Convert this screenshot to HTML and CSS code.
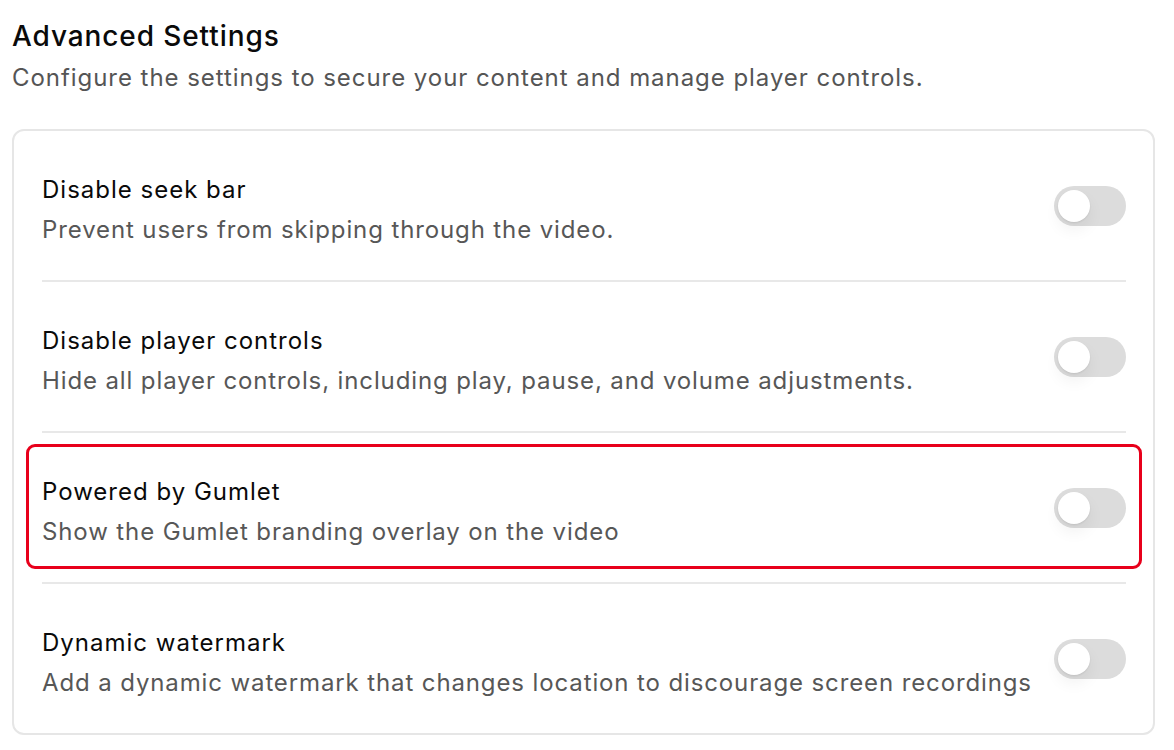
FILE: index.html
```html
<!DOCTYPE html>
<html lang="en">
<head>
<meta charset="UTF-8" />
<meta name="viewport" content="width=device-width, initial-scale=1" />
<title>Advanced Settings</title>
<link rel="stylesheet" href="styles.css">
</head>
<body>

<section class="settings">
  <h2 class="settings-title">Advanced Settings</h2>
  <p class="settings-sub">Configure the settings to secure your content and manage player controls.</p>

  <div class="card">
    <div class="row">
      <div class="row-text">
        <div class="row-title">Disable seek bar</div>
        <div class="row-desc">Prevent users from skipping through the video.</div>
      </div>
      <label class="toggle"><input type="checkbox"><span class="track"></span></label>
    </div>

    <div class="row">
      <div class="row-text">
        <div class="row-title">Disable player controls</div>
        <div class="row-desc">Hide all player controls, including play, pause, and volume adjustments.</div>
      </div>
      <label class="toggle"><input type="checkbox"><span class="track"></span></label>
    </div>

    <!-- marked row -->
    <div class="row highlight">
      <div class="row-text">
        <div class="row-title">Powered by Gumlet</div>
        <div class="row-desc">Show the Gumlet branding overlay on the video</div>
      </div>
      <label class="toggle"><input type="checkbox"><span class="track"></span></label>
    </div>

    <div class="row">
      <div class="row-text">
        <div class="row-title">Dynamic watermark</div>
        <div class="row-desc">Add a dynamic watermark that changes location to discourage screen recordings</div>
      </div>
      <label class="toggle"><input type="checkbox"><span class="track"></span></label>
    </div>
  </div>
</section>

</body>
</html>
```

FILE: styles.css
```css
body, html {
  margin: 0; padding: 0;
  font-family: 'Inter', 'Noto Sans', sans-serif;
  background: #fff;
  color: #111;
}
.settings {
  padding: 16px 19px 0 12px;
}
.settings-title {
  margin: 0;
  font-size: 28px;
  font-weight: 500;
  line-height: 40px;
  letter-spacing: 0.9px;
  color: #0a0a0a;
}
.settings-sub {
  margin: 6px 0 0;
  font-size: 24px;
  line-height: 32px;
  letter-spacing: 0.95px;
  color: #555;
}
.card {
  margin-top: 35px;
  border: 2px solid #e6e6e6;
  border-radius: 12px;
  padding: 0 27px 0 28px;
}
.row {
  position: relative;
  display: flex;
  align-items: center;
  justify-content: space-between;
  height: 149px;
  border-bottom: 2px solid #e8e8e8;
}
.row:last-child {
  border-bottom: none;
}
.row-text {
  padding-top: 8px;
}
.row-title {
  font-size: 24px;
  line-height: 34px;
  letter-spacing: 1px;
  color: #0a0a0a;
}
.row-desc {
  margin-top: 7px;
  font-size: 24px;
  line-height: 32px;
  letter-spacing: 0.88px;
  color: #575757;
}

/* red outline around the marked row */
.highlight::before {
  content: "";
  position: absolute;
  left: -16px;
  right: -16px;
  top: 11px;
  bottom: 13px;
  border: 3px solid #e8001b;
  border-radius: 9px;
  pointer-events: none;
}

/* Toggle switch */
.toggle {
  position: relative;
  flex: none;
  width: 72px;
  height: 40px;
  cursor: pointer;
}
.toggle input {
  display: none;
}
.track {
  position: absolute;
  inset: 0;
  background: #dcdcdc;
  border-radius: 20px;
}
.track::after {
  content: "";
  position: absolute;
  left: 4px;
  top: 4px;
  width: 32px;
  height: 32px;
  border-radius: 50%;
  background: #fff;
  box-shadow: 0 8px 16px rgba(0, 0, 0, 0.06), 0 1px 2px rgba(0, 0, 0, 0.08);
}
```
